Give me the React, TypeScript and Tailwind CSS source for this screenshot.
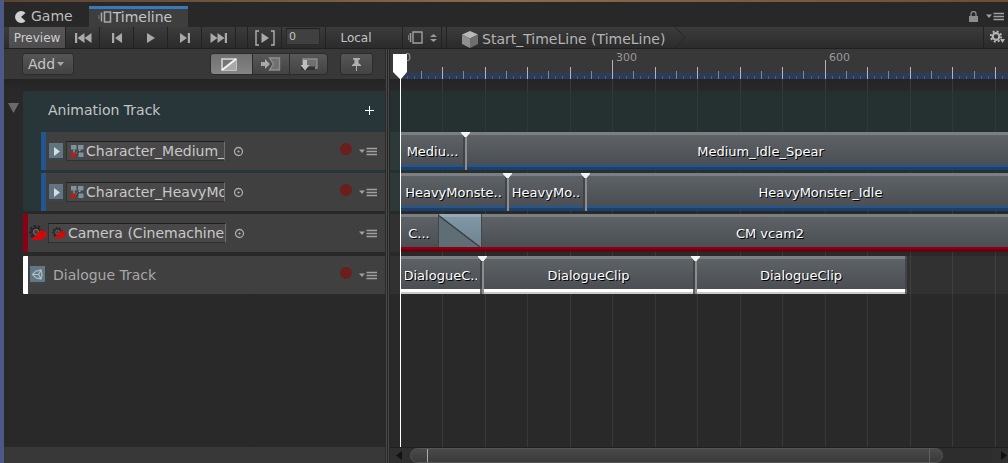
import { useState } from 'react'
import type { ReactNode } from 'react'

const PX_PER_FRAME = 212.6 / 300
const START_X = 10

type Clip = { label: string; width: string; marker?: boolean; blend?: boolean; end?: boolean; tight?: boolean }

const ticks = Array.from({ length: 400 }, (_, i) => i * 10)

function tickX(frame: number) {
  return Math.floor(START_X + frame * PX_PER_FRAME)
}

/* ---------- icons ---------- */

function TimelineIcon() {
  return (
    <svg width="14" height="12" viewBox="0 0 14 12" fill="none" stroke="#a8a8a8">
      <path d="M1 4v4" stroke="#777" />
      <path d="M3.500 1.500v9" strokeWidth="1.500" />
      <path d="M6.500 1h6v10h-6z" strokeWidth="1.600" />
    </svg>
  )
}

function MenuIcon() {
  return (
    <svg width="18" height="9" viewBox="0 0 18 9">
      <path d="M0 2.500h6L3 6z" fill="#a0a0a0" />
      <path d="M7.500 1.500h10.500M7.500 4.500h10.500M7.500 7.500h10.500" stroke="#a0a0a0" strokeWidth="1.600" />
    </svg>
  )
}

function TargetIcon() {
  return (
    <svg width="11" height="11" viewBox="0 0 11 11">
      <circle cx="5.500" cy="5.500" r="4" fill="none" stroke="#a9a9a9" strokeWidth="1.300" />
      <circle cx="5.500" cy="5.500" r="1.100" fill="#b5b5b5" />
    </svg>
  )
}

function AnimatorIcon() {
  return (
    <svg width="14" height="14" viewBox="0 0 14 14" className="shrink-0">
      <path d="M1 1h5.500v4.500H1zM8 1h5.500v4.500H8zM8.500 8.500h5V13h-5z" fill="#7d929d" />
      <path d="M4 5.500v3M10.500 5.500L6 10" stroke="#93a6af" strokeWidth="1.200" fill="none" />
      <path d="M6 11l3-4" stroke="#262626" strokeWidth="1.200" />
      <path d="M1.500 8v6L7 10.500z" fill="#e00d0d" />
    </svg>
  )
}

function CameraIcon({ size }: { size: number }) {
  return (
    <svg width={size} height={size - 2} viewBox="0 0 18 16" className="shrink-0">
      <circle cx="7" cy="7" r="6" fill="none" stroke="#232323" strokeWidth="2" strokeDasharray="2.200 2" />
      <circle cx="7" cy="7" r="4.300" fill="#3a3a3a" stroke="#2a2a2a" strokeWidth="2" />
      <circle cx="7" cy="7" r="2.500" fill="none" stroke="#777" />
      <path d="M2 15L13.500 3v4.500L17.500 6v7l-3-1.500V15z" fill="#cf0a0a" />
    </svg>
  )
}

function ClipTypeIcon() {
  return (
    <svg width="14" height="17" viewBox="0 0 14 17" className="shrink-0">
      <rect width="14" height="17" fill="#3a464c" />
      <rect width="14" height="15" fill="#60757f" />
      <path d="M5 4l6 4.500L5 13z" fill="#d8dde0" />
    </svg>
  )
}

function ScriptIcon() {
  return (
    <svg width="15" height="18" viewBox="0 0 15 18" className="shrink-0">
      <rect width="15" height="18" fill="#3a464c" />
      <rect width="15" height="16" fill="#627783" />
      <path d="M2.500 8.500L6 5l5-1 1 4.500-1 4.500-5-1z" fill="none" stroke="#a9b8c0" strokeWidth="1.300" />
      <path d="M2.500 8.500h6M8.500 8.500l2.500-4.500M8.500 8.500L11 13" stroke="#b6c3ca" strokeWidth="1.200" />
    </svg>
  )
}

const transport = [
  { name: 'First frame', d: 'M1 1h2.200v10H1zM10.500 1v10L3.500 6zM17.500 1v10L10.500 6z', w: 18 },
  { name: 'Previous frame', d: 'M1 1h2.200v10H1zM11 1v10L4 6z', w: 12 },
  { name: 'Play', d: 'M2 1v10l8-5z', w: 12 },
  { name: 'Next frame', d: 'M1 1v10l7-5zM8.800 1H11v10H8.800z', w: 12 },
  { name: 'Last frame', d: 'M.5 1v10l7-5zM7.500 1v10l7-5zM14.800 1H17v10h-2.200z', w: 18 },
]

/* ---------- left side ---------- */

function ObjectField({ label, value, icon }: { label: string; value: string; icon: ReactNode }) {
  return (
    <label className="flex h-5 min-w-0 flex-1 items-center gap-0.5 border border-[#303030] border-t-[#1f1f1f] border-r-[#707070] bg-[#484848] pl-[3px]">
      {icon}
      <input
        aria-label={label}
        defaultValue={value}
        className="h-[18px] w-full min-w-0 bg-transparent text-[14px] text-[#c8c8c8] outline-none"
      />
    </label>
  )
}

function TrackHeader({ bar, indent, record, children }: { bar: string; indent?: boolean; record?: boolean; children: ReactNode }) {
  return (
    <div className={`flex h-[38px] items-center bg-[#404040] ${indent ? 'ml-[18px]' : ''}`}>
      <div className={`h-full w-[5px] shrink-0 rounded-l-[1px] ${bar}`} />
      {children}
      {record && (
        <button aria-label="Record" className="mb-1 ml-auto size-3 rounded-full bg-[#6b1f1c]" />
      )}
      <button aria-label="Track options" className={`mr-2 ${record ? 'ml-[7px]' : 'ml-auto'}`}>
        <MenuIcon />
      </button>
    </div>
  )
}

function AnimatorTrack({ value }: { value: string }) {
  return (
    <TrackHeader bar="bg-[#23568f]" indent record>
      <div className="mx-[3px]">
        <ClipTypeIcon />
      </div>
      <div className="flex w-[159px] shrink-0">
        <ObjectField label="Animator" value={value} icon={<AnimatorIcon />} />
      </div>
      <button aria-label="Select object" className="ml-2">
        <TargetIcon />
      </button>
    </TrackHeader>
  )
}

/* ---------- right side ---------- */

function Lane({ clips, bar }: { clips: Clip[]; bar: string }) {
  return (
    <div className="flex h-[38px] overflow-hidden bg-white/4 pl-2.5">
      {clips.map((clip, i) =>
        clip.blend ? (
          <div key={i} className={`flex shrink-0 flex-col bg-linear-to-b from-[#8299a7] to-[#6b808c] ${clip.width}`}>
            <svg className="min-h-0 w-full flex-1" viewBox="0 0 44 33" preserveAspectRatio="none">
              <path d="M0 0v33h41z" fill="#5f6d74" />
              <path d="M0 0h44v3H0z" fill="#a3b4be" opacity=".6" />
              <path d="M0 1l42 32" stroke="#333b40" strokeWidth="1.300" />
              <path d="M.5 0v33M43.500 0v33" stroke="#3f474b" />
            </svg>
            <div className={`h-[5px] shrink-0 ${bar}`} />
          </div>
        ) : (
          <div
            key={i}
            className={`relative flex shrink-0 flex-col border-t-[3px] border-t-[#7b7f82] bg-linear-to-b from-[#5d6266] to-[#484c50] ${clip.width}`}
          >
            <div
              className={`flex min-h-0 flex-1 items-center justify-center overflow-hidden text-[13px] whitespace-nowrap text-white [text-shadow:1px_1px_0_#000] ${clip.tight ? '' : 'mx-[5px]'}`}
            >
              <span className="mt-1">{clip.label}</span>
            </div>
            <div className={`h-[5px] shrink-0 ${bar}`} />
            {clip.end && <div className="absolute -top-[3px] right-0 bottom-0 w-0.5 bg-[#3c3f42]/80" />}
            {clip.marker && (
              <>
                <div className="absolute -top-[3px] bottom-0 left-0 w-0.5 bg-[#8c8e90]" />
                <svg className="absolute -top-[3px] -left-1 z-10" width="9" height="6" viewBox="0 0 9 6">
                  <path d="M0 0h9v1L5.500 5h-2L0 1z" fill="#f4f4f4" />
                </svg>
              </>
            )}
          </div>
        ),
      )}
    </div>
  )
}

function Ruler() {
  return (
    <div className="relative h-[30px] overflow-hidden bg-[#383838]">
      <svg className="absolute inset-0 h-full w-full" shapeRendering="crispEdges">
        <rect x={START_X} y="24" width="100%" height="6" fill="#2c3a5c" />
        {ticks.map((f) => {
          const y = f % 300 === 0 ? 11 : f % 60 === 0 ? 18 : f % 30 === 0 ? 22 : 27
          const fill = f % 60 === 0 ? '#b4b4b4' : f % 30 === 0 ? '#7e8693' : '#4d607a'
          return <rect key={f} x={tickX(f)} y={y} width="1" height={30 - y} fill={fill} />
        })}
      </svg>
      {[0, 300, 600].map((f) => (
        <span key={f} className="absolute top-px text-[11px] leading-4 text-[#9a9a9a]" style={{ left: tickX(f) + 4 }}>
          {f}
        </span>
      ))}
    </div>
  )
}

export default function App() {
  const [frame, setFrame] = useState('0')

  return (
    <div className="flex min-h-screen flex-col border-l-4 border-[#4d5985] bg-[#292929] font-['DejaVu_Sans',sans-serif] text-[#c4c4c4]">
      <div className="h-0.5 bg-linear-to-r from-[#5b4432] via-[#8a6b4a] to-[#6e4c35]" />

      {/* tabs */}
      <div className="flex h-[25px] items-end bg-[#282828] text-[14px]">
        <button className="flex h-[21px] items-center gap-1 pl-[11px] text-[#bdbdbd]">
          <svg width="12" height="12" viewBox="0 0 12 12">
            <path d="M10.500 2A6 6 0 1 0 10.500 10L6 6z" fill="#d0d0d0" />
          </svg>
          Game
        </button>
        <button className="ml-4 flex h-[21px] w-[99px] items-center gap-px border-t-[3px] border-[#3a78bb] bg-[#3e3e3e] pb-0.5 pl-[9px]">
          <TimelineIcon />
          Timeline
        </button>
        <div className="mr-1 ml-auto flex h-[21px] items-center gap-2">
          <button aria-label="Lock">
            <svg width="9" height="11" viewBox="0 0 9 11">
              <path d="M2 5V3a2.500 2.500 0 0 1 5 0v2" fill="none" stroke="#8c8c8c" strokeWidth="1.300" />
              <path d="M0 5h9v6H0z" fill="#8c8c8c" />
            </svg>
          </button>
          <button aria-label="Window options">
            <MenuIcon />
          </button>
        </div>
      </div>

      {/* toolbar */}
      <div className="flex h-[22px] border-b border-[#202020] bg-linear-to-b from-[#3c3c3c] to-[#2b2b2b]">
        <div className="flex w-[386px] shrink-0 divide-x divide-[#222] pl-[5px] text-[12px]">
          <button className="w-[57px] bg-linear-to-b from-[#575757] to-[#4d4d4d] text-[#cfcfcf]">Preview</button>
          {transport.map((t) => (
            <button key={t.name} aria-label={t.name} className="flex w-[34px] items-center justify-center">
              <svg width={t.w} height="12" viewBox={`0 0 ${t.w} 12`}>
                <path d={t.d} fill="#a9a9a9" />
              </svg>
            </button>
          ))}
          <div className="w-3" />
          <button aria-label="Play range" className="flex w-[34px] items-center justify-center">
            <svg width="20" height="16" viewBox="0 0 20 16">
              <path d="M4 1H1v14h3M16 1h3v14h-3" fill="none" stroke="#b0b0b0" strokeWidth="1.400" />
              <path d="M6.500 3v10l7.500-5z" fill="#a9a9a9" />
            </svg>
          </button>
          <div className="flex w-[44px] items-start pt-px pl-1">
            <input
              aria-label="Frame"
              value={frame}
              onChange={(e) => setFrame(e.target.value)}
              className="h-[17px] w-[34px] border border-[#2a2a2a] border-t-[#1f1f1f] bg-[#404040] pl-0.5 text-[11px] text-[#c4c4c4]"
            />
          </div>
          <button className="w-[60px]">Local</button>
        </div>
        <button aria-label="Select timeline" className="ml-3 flex w-[40px] items-center justify-center gap-1.5 border-x border-[#222]">
          <svg width="17" height="13" viewBox="0 0 17 13" fill="none" stroke="#a0a0a0">
            <path d="M1.500 4v5" stroke="#777" />
            <path d="M3.500 2v9" strokeWidth="1.500" />
            <path d="M6 1h9v11H6z" strokeWidth="1.400" />
          </svg>
          <svg width="7" height="8" viewBox="0 0 7 8">
            <path d="M0 3l3.500-3L7 3zM0 5h7L3.500 8z" fill="#9a9a9a" />
          </svg>
        </button>
        <div className="ml-1 flex min-w-0 items-center gap-1 border-l border-[#222] pl-[15px] text-[14px] whitespace-nowrap text-[#b4b4b4]">
          <svg className="mt-1" width="16" height="17" viewBox="0 0 16 17">
            <path d="M8 0l8 3.500L8 7.500 0 3.500z" fill="#b9b9b9" />
            <path d="M0 3.500l8 4V17l-8-4z" fill="#8f8f8f" />
            <path d="M16 3.500l-8 4V17l8-4z" fill="#6e6e6e" />
          </svg>
          <span className="mt-1">Start_TimeLine (TimeLine)</span>
          <svg className="ml-1.5" width="11" height="21" viewBox="0 0 11 21">
            <path d="M0 0l10 10.500L0 21" fill="none" stroke="#262626" />
          </svg>
        </div>
        <button aria-label="Settings" className="ml-auto flex w-[25px] items-center justify-end border-l border-[#222] pr-0.5 pb-0.5">
          <svg width="17" height="14" viewBox="0 0 17 14">
            <circle cx="7" cy="6.500" r="3.300" fill="none" stroke="#b5b5b5" strokeWidth="2.200" />
            <circle cx="7" cy="6.500" r="5.200" fill="none" stroke="#b5b5b5" strokeWidth="1.800" strokeDasharray="2.040 2.040" />
            <path d="M11 9h5l-2.500 4z" fill="#b5b5b5" />
          </svg>
        </button>
      </div>

      <div className="flex flex-1">
        {/* track list */}
        <div className="flex w-[381px] shrink-0 flex-col">
          <div className="flex h-[30px] items-center bg-[#383838] pl-[18px]">
            <button className="flex h-[22px] w-[52px] items-center justify-center gap-0.5 rounded-[3px] border border-[#2b2b2b] bg-linear-to-b from-[#565656] to-[#434343] pr-1 text-[14px]">
              Add
              <svg width="7" height="4" viewBox="0 0 7 4">
                <path d="M0 0h7L3.500 4z" fill="#a8a8a8" />
              </svg>
            </button>
            <div className="ml-[136px] flex h-[22px] w-[118px] divide-x divide-[#2b2b2b] overflow-hidden rounded border border-[#2b2b2b] bg-linear-to-b from-[#585858] to-[#434343]">
              <button aria-label="Mix mode" className="flex flex-1 items-center justify-center bg-linear-to-b from-[#707070] to-[#858585] pr-1">
                <svg width="16" height="13" viewBox="0 0 16 13">
                  <path d="M1 1h14v11H1z" fill="#757575" stroke="#d8d8d8" strokeWidth="1.500" />
                  <path d="M2 12L15 1v11z" fill="#a8a8a8" />
                  <path d="M1 12L15 1" stroke="#f4f4f4" strokeWidth="2" />
                </svg>
              </button>
              <button aria-label="Ripple mode" className="flex flex-1 items-center justify-center">
                <svg width="20" height="14" viewBox="0 0 20 14">
                  <path d="M0 5h4V2l5 5-5 5V9H0z" fill="#a9a9a9" />
                  <path d="M8.500 1h10v12h-10l4-6z" fill="#707070" stroke="#8d8d8d" strokeWidth="1.400" />
                </svg>
              </button>
              <button aria-label="Replace mode" className="flex flex-1 items-center justify-center">
                <svg width="18" height="14" viewBox="0 0 18 14">
                  <path d="M3 2h14v9H3z" fill="#707070" stroke="#8d8d8d" strokeWidth="1.400" />
                  <path d="M1 9.500h14V13H1z" fill="#333" />
                  <path d="M3 3h4v5h2.500L5 13.500.5 8H3z" fill="#bdbdbd" />
                </svg>
              </button>
            </div>
            <button aria-label="Pin markers" className="ml-3 flex h-[22px] w-[33px] items-center justify-center rounded-[3px] border border-[#2b2b2b] bg-linear-to-b from-[#565656] to-[#434343]">
              <svg width="9" height="13" viewBox="0 0 9 13">
                <path d="M1 0h7v1.500L6.500 2v3L9 7v1H0V7l2.500-2V2L1 1.500zM4 8h1v5H4z" fill="#b0b0b0" />
              </svg>
            </button>
          </div>

          <div className="flex-1 bg-linear-to-b from-[#242424] to-[#292929] to-[12px] pt-3">
            <div className="flex">
              <button aria-label="Collapse group" className="mt-3 h-2.5 w-[19px] shrink-0 pl-1">
                <svg width="11" height="10" viewBox="0 0 11 10">
                  <path d="M0 0h11L5.500 10z" fill="#6a6a6a" />
                </svg>
              </button>
              <div className="flex-1 rounded-l bg-[#28363a]">
                <div className="flex h-[38px] items-center justify-between pr-[11px] pl-[25px] text-[14px]">
                  Animation Track
                  <button aria-label="Add track to group">
                    <svg width="9" height="9" viewBox="0 0 9 9">
                      <path d="M4 0h1v4h4v1H5v4H4V5H0V4h4z" fill="#fff" />
                    </svg>
                  </button>
                </div>
                <div className="flex flex-col gap-[3px] pt-[3px]">
                  <AnimatorTrack value="Character_Medium_" />
                  <AnimatorTrack value="Character_HeavyMo" />
                </div>
              </div>
            </div>
            <div className="mt-[3px] ml-[19px] flex flex-col gap-1">
              <TrackHeader bar="bg-[#8a0014]">
                <div className="ml-px">
                  <CameraIcon size={18} />
                </div>
                <div className="ml-px flex w-[178px] shrink-0">
                  <ObjectField label="Camera" value="Camera (CinemachineB" icon={<CameraIcon size={14} />} />
                </div>
                <button aria-label="Select object" className="ml-2">
                  <TargetIcon />
                </button>
              </TrackHeader>
              <TrackHeader bar="bg-white" record>
                <div className="ml-0.5">
                  <ScriptIcon />
                </div>
                <span className="ml-2 text-[14px] text-[#a8a8a8]">Dialogue Track</span>
              </TrackHeader>
            </div>
          </div>
          <div className="h-4 bg-[#383838]" />
        </div>

        <div className="w-[5px] shrink-0 border-l border-[#2a2a2a] bg-[#252525]">
          <div className="h-full w-[3px] border-x border-[#4a4a4a]" />
        </div>

        {/* timeline canvas */}
        <div className="relative flex min-w-0 flex-1 flex-col">
          <Ruler />
          <div className="relative flex-1 overflow-hidden bg-linear-to-b from-[#242424] to-[#292929] to-[12px] pt-3">
            <svg className="absolute inset-0 h-full w-full" shapeRendering="crispEdges">
              {ticks
                .filter((f) => f > 0 && f % 60 === 0)
                .map((f) => (
                  <rect key={f} x={tickX(f)} y="0" width="1" height="100%" fill="#393939" />
                ))}
            </svg>
            <div className="relative">
              <div className="bg-[#213739]/50 pt-[41px]">
                <Lane
                  bar="border-b-[3px] border-[#1d406b] bg-[#23568f]"
                  clips={[
                    { label: 'Mediu...', width: 'w-[65px]', end: true },
                    { label: 'Medium_Idle_Spear', width: 'w-[591px]', marker: true },
                  ]}
                />
                <div className="h-[3px]" />
                <Lane
                  bar="border-b-[3px] border-[#1d406b] bg-[#23568f]"
                  clips={[
                    { label: 'HeavyMonste..', width: 'w-[107px]', end: true },
                    { label: 'HeavyMo..', width: 'w-[78px]', marker: true, end: true },
                    { label: 'HeavyMonster_Idle', width: 'w-[471px]', marker: true },
                  ]}
                />
              </div>
              <div className="flex flex-col gap-1 pt-[3px]">
                <Lane
                  bar="border-b-[3px] border-[#6a0010] bg-[#8a0014]"
                  clips={[
                    { label: 'C...', width: 'w-[38px]', tight: true },
                    { label: '', width: 'w-[44px]', blend: true },
                    { label: 'CM vcam2', width: 'w-[576px]' },
                  ]}
                />
                <Lane
                  bar="border-b-2 border-[#c8c8c8] bg-white"
                  clips={[
                    { label: 'DialogueC..', width: 'w-[82px]', end: true },
                    { label: 'DialogueClip', width: 'w-[213px]', marker: true, end: true },
                    { label: 'DialogueClip', width: 'w-[212px]', marker: true, end: true },
                  ]}
                />
              </div>
            </div>
          </div>

          {/* playhead */}
          <div className="pointer-events-none absolute top-[5px] bottom-4 left-[3px] flex w-[15px] flex-col items-center">
            <svg width="15" height="25" viewBox="0 0 15 25" className="shrink-0">
              <path d="M0 0h14v18l-6 7H7l-7-7z" fill="#fff" />
            </svg>
            <div className="w-px flex-1 bg-white" />
          </div>

          {/* scrollbar */}
          <div className="flex h-4 items-center border-t border-[#202020] bg-[#2f2f2f]">
            <button aria-label="Scroll left" className="ml-1.5 shrink-0">
              <svg width="6" height="9" viewBox="0 0 6 9">
                <path d="M6 0v9L0 4.500z" fill="#111" />
              </svg>
            </button>
            <div className="ml-2 flex h-full min-w-0 flex-1 rounded-full bg-[#2d2d2d]">
              <div className="flex h-full w-[91.5%] justify-between rounded-full border border-[#555] bg-linear-to-b from-[#4a4a4a] to-[#3a3a3a] pr-3 pl-4">
                <div className="w-px bg-[#aaa]" />
                <div className="w-px bg-[#606060]" />
              </div>
            </div>
            <button aria-label="Scroll right" className="mr-px ml-2 shrink-0">
              <svg width="6" height="9" viewBox="0 0 6 9">
                <path d="M0 0v9l6-4.500z" fill="#111" />
              </svg>
            </button>
          </div>
        </div>
      </div>
    </div>
  )
}
